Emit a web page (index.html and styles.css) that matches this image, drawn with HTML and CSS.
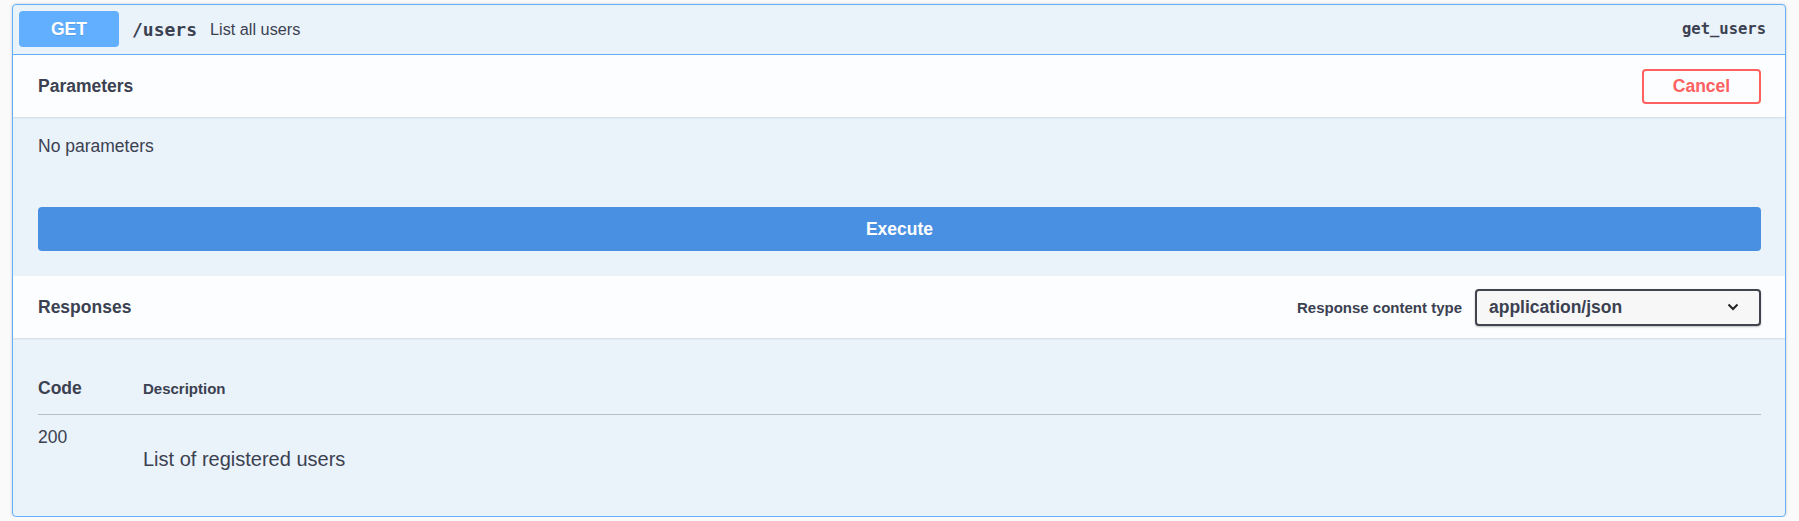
FILE: index.html
```html
<!DOCTYPE html>
<html>
<head>
<meta charset="utf-8">
<link rel="stylesheet" href="styles.css">
</head>
<body>
<div class="opblock">
  <div class="summary">
    <span class="method">GET</span>
    <span class="path">/users</span>
    <span class="summary-desc">List all users</span>
    <span class="op-id">get_users</span>
  </div>
  <div class="section-header">
    <h4 class="section-title">Parameters</h4>
    <button class="btn-cancel">Cancel</button>
  </div>
  <div class="params-body">No parameters</div>
  <div class="execute-wrapper">
    <button class="btn-execute">Execute</button>
  </div>
  <div class="section-header">
    <h4 class="section-title">Responses</h4>
    <div class="content-type">
      <span class="ct-label">Response content type</span>
      <div class="select">
        <span>application/json</span>
        <svg class="chevron" width="12" height="8" viewBox="0 0 12 8"><path d="M1.5 1.5 L6 6 L10.5 1.5" fill="none" stroke="#222" stroke-width="2"/></svg>
      </div>
    </div>
  </div>
  <div class="responses-inner">
    <div class="resp-row resp-head">
      <div class="col-status">Code</div>
      <div class="col-desc-head">Description</div>
    </div>
    <div class="resp-row resp-body">
      <div class="col-status code-val">200</div>
      <div class="col-desc"><p>List of registered users</p></div>
    </div>
  </div>
</div>
</body>
</html>
```

FILE: styles.css
```css
* { box-sizing: border-box; }
html, body { margin: 0; }
body {
  background: #fafafa;
  padding: 4px 13px 0 12px;
  font-family: "Liberation Sans", Arial, sans-serif;
  color: #3b4151;
}
.opblock {
  border: 1px solid #61affe;
  border-radius: 4px;
  background: rgba(97,175,254,.1);
  box-shadow: 0 0 3px rgba(0,0,0,.19);
}
.summary {
  display: flex;
  align-items: center;
  padding: 6px 19px 7px 6px;
  border-bottom: 1px solid #61affe;
}
.method {
  width: 100px;
  height: 36px;
  display: flex;
  align-items: center;
  justify-content: center;
  background: #61affe;
  color: #fff;
  border-radius: 4px;
  font-weight: 700;
  font-size: 17.5px;
  text-shadow: 0 1px 0 rgba(0,0,0,.1);
}
.path {
  font-family: "DejaVu Sans Mono", monospace;
  font-weight: 700;
  font-size: 18px;
  letter-spacing: 0;
  padding: 0 13px;
  color: #3b4151;
}
.summary-desc {
  flex: 1;
  font-size: 16.25px;
  color: #3b4151;
}
.op-id {
  font-family: "DejaVu Sans Mono", monospace;
  font-weight: 700;
  font-size: 15.5px;
  color: #3b4151;
}
.section-header {
  display: flex;
  align-items: center;
  justify-content: space-between;
  min-height: 62px;
  padding: 0 24px 0 25px;
  background: rgba(255,255,255,.8);
  box-shadow: 0 1px 2px rgba(0,0,0,.1);
}
.section-title {
  margin: 0;
  font-size: 17.5px;
  font-weight: 700;
}
.btn-cancel {
  width: 119px;
  height: 35px;
  border: 2px solid #ff6060;
  border-radius: 4px;
  background: transparent;
  color: #ff6060;
  font-family: "Liberation Sans", Arial, sans-serif;
  font-weight: 700;
  font-size: 17.5px;
  padding: 0;
}
.params-body {
  padding: 19px 25px 0;
  font-size: 17.5px;
  line-height: 21px;
}
.execute-wrapper {
  padding: 50px 24px 25px 25px;
}
.btn-execute {
  display: block;
  width: 100%;
  height: 44px;
  border: none;
  border-radius: 4px;
  background: #4990e2;
  color: #fff;
  font-family: "Liberation Sans", Arial, sans-serif;
  font-weight: 700;
  font-size: 17.5px;
}
.content-type {
  display: flex;
  align-items: center;
  gap: 13px;
}
.ct-label {
  font-size: 15px;
  font-weight: 700;
}
.select {
  width: 286px;
  height: 37px;
  border: 2px solid #41444e;
  border-radius: 4px;
  background: #f7f7f7;
  box-shadow: 0 1px 2px rgba(0,0,0,.25);
  display: flex;
  align-items: center;
  justify-content: space-between;
  padding: 0 20px 0 12px;
  font-size: 17.5px;
  font-weight: 700;
  color: #3b4151;
}
.responses-inner {
  padding: 25px 24px 25px 25px;
}
.resp-row {
  display: flex;
}
.resp-head {
  padding: 15px 0;
  border-bottom: 1px solid rgba(59,65,81,.3);
  align-items: center;
}
.col-status {
  width: 105px;
  font-size: 17.5px;
  font-weight: 700;
  line-height: 21px;
}
.col-desc-head {
  font-size: 15px;
  font-weight: 700;
  line-height: 21px;
}
.resp-body {
  padding-top: 12px;
}
.code-val {
  font-weight: 400;
}
.col-desc p {
  margin: 21px 0 20px;
  font-size: 20px;
  line-height: 23px;
}
```
